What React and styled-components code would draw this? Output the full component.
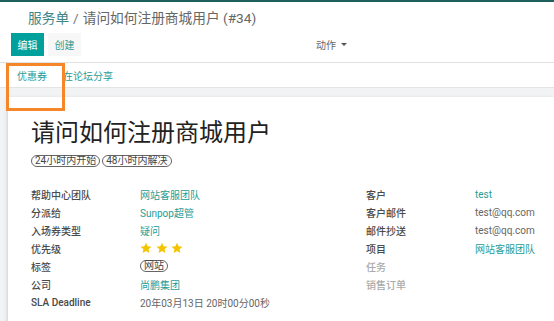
import React from "react";
import styled, { createGlobalStyle } from "styled-components";

const Global = createGlobalStyle`
  html, body { margin: 0; padding: 0; background: #fff; }
  body { font-family: Roboto, "Noto Sans CJK SC", sans-serif; overflow: hidden; }
  * { box-sizing: border-box; }
`;

const Page = styled.div`
  position: relative;
  width: 554px;
  height: 321px;
  overflow: hidden;
  border-top: 2px solid #1e5f5e;
`;

const ControlPanel = styled.div`
  border-bottom: 1px solid #e2e2e2;
  padding: 6px 0 6px 11px;
`;

const Breadcrumb = styled.div`
  padding-left: 17px;
  font-size: 13.7px;
  line-height: 20px;
  color: #666;
  height: 25px;
`;

const Crumb = styled.span`
  color: #3f8583;
`;

const Sep = styled.span`
  margin: 0 4px;
  color: #777;
`;

const ButtonsRow = styled.div`
  display: grid;
  grid-template-columns: 266px 1fr;
  align-items: center;
`;

const ButtonGroup = styled.div`
  display: flex;
  gap: 4px;
`;

const Button = styled.button`
  height: 23px;
  width: 33px;
  border: none;
  border-radius: 0;
  padding: 0;
  font-family: inherit;
  font-size: 10px;
  background: ${(p) => (p.$primary ? "#00a09d" : "#f7f7f7")};
  color: ${(p) => (p.$primary ? "#fff" : "#2a9a96")};
`;

const Action = styled.div`
  padding-left: 39px;
  font-size: 10px;
  color: #666;
  display: flex;
  align-items: center;
  gap: 5px;
`;

const Caret = styled.span`
  width: 0;
  height: 0;
  border-left: 3px solid transparent;
  border-right: 3px solid transparent;
  border-top: 3px solid #555;
`;

const StatusBar = styled.div`
  height: 24px;
  display: flex;
  align-items: center;
  padding-left: 17px;
  gap: 16px;
  background: #fff;
`;

const StatusLink = styled.span`
  font-size: 10px;
  color: #1f9c97;
`;

const FormBg = styled.div`
  background: #f2f3f4;
  border-top: 1px solid #e4e4e4;
  padding: 9px 0 0 7px;
`;

const Sheet = styled.div`
  background: #fff;
  border-left: 1px solid #dcdcdc;
  box-shadow: -1px 0 3px rgba(0, 0, 0, 0.08);
  padding: 20px 0 20px 23px;
  min-height: 240px;
`;

const Title = styled.h1`
  margin: 0;
  font-size: 24px;
  font-weight: 400;
  line-height: 32px;
  color: #222;
`;

const Tags = styled.div`
  display: flex;
  gap: 2px;
  margin-top: 6px;
`;

const Pill = styled.span`
  display: inline-flex;
  align-items: center;
  height: 12px;
  padding: 0 3px;
  border: ${(p) => (p.$thick ? "1.5px" : "1px")} solid #666;
  border-radius: 7px;
  font-size: 10px;
  line-height: 10px;
  color: #444;
`;

const Groups = styled.div`
  display: grid;
  grid-template-columns: 335px 1fr;
  margin-top: 18px;
`;

const Group = styled.div`
  display: grid;
  grid-template-columns: 109px 1fr;
  grid-auto-rows: 18px;
  align-items: center;
`;

const Label = styled.div`
  font-size: 10px;
  font-weight: 500;
  color: ${(p) => (p.$muted ? "#aaa" : "#4a4a4a")};
`;

const Value = styled.div`
  font-size: 10px;
  color: ${(p) => (p.$link ? "#1f9c97" : "#666")};
  display: flex;
  align-items: center;
`;

const Stars = styled.div`
  display: flex;
  gap: 3.5px;
`;

const Highlight = styled.div`
  position: absolute;
  left: 6px;
  top: 61px;
  width: 59px;
  height: 48px;
  border: 3px solid #f6862a;
`;

const Star = () => (
  <svg width="12" height="12" viewBox="0 0 24 24">
    <path
      d="M12 1.5l3.2 7.1 7.7.7-5.8 5.1 1.7 7.6L12 18l-6.8 4 1.7-7.6L1.1 9.3l7.7-.7z"
      fill="#f3c500"
    />
  </svg>
);

const left = [
  ["帮助中心团队", <Value $link>网站客服团队</Value>],
  ["分派给", <Value $link>Sunpop超管</Value>],
  ["入场券类型", <Value $link>疑问</Value>],
  [
    "优先级",
    <Value>
      <Stars>
        <Star />
        <Star />
        <Star />
      </Stars>
    </Value>,
  ],
  [
    "标签",
    <Value>
      <Pill $thick>网站</Pill>
    </Value>,
  ],
  ["公司", <Value $link>尚鹏集团</Value>],
  ["SLA Deadline", <Value>20年03月13日 20时00分00秒</Value>],
];

const right = [
  ["客户", <Value $link>test</Value>],
  ["客户邮件", <Value>test@qq.com</Value>],
  ["邮件抄送", <Value>test@qq.com</Value>],
  ["项目", <Value $link>网站客服团队</Value>],
  ["任务", <Value />, true],
  ["销售订单", <Value />, true],
];

export default function App() {
  return (
    <>
      <Global />
      <Page>
        <ControlPanel>
          <Breadcrumb>
            <Crumb>服务单</Crumb>
            <Sep>/</Sep>请问如何注册商城用户 (#34)
          </Breadcrumb>
          <ButtonsRow>
            <ButtonGroup>
              <Button $primary>编辑</Button>
              <Button>创建</Button>
            </ButtonGroup>
            <Action>
              动作 <Caret />
            </Action>
          </ButtonsRow>
        </ControlPanel>
        <StatusBar>
          <StatusLink>优惠券</StatusLink>
          <StatusLink>在论坛分享</StatusLink>
        </StatusBar>
        <FormBg>
          <Sheet>
            <Title>请问如何注册商城用户</Title>
            <Tags>
              <Pill>24小时内开始</Pill>
              <Pill>48小时内解决</Pill>
            </Tags>
            <Groups>
              <Group>
                {left.map(([l, v]) => (
                  <React.Fragment key={l}>
                    <Label>{l}</Label>
                    {v}
                  </React.Fragment>
                ))}
              </Group>
              <Group>
                {right.map(([l, v, m]) => (
                  <React.Fragment key={l}>
                    <Label $muted={m}>{l}</Label>
                    {v}
                  </React.Fragment>
                ))}
              </Group>
            </Groups>
          </Sheet>
        </FormBg>
        <Highlight />
      </Page>
    </>
  );
}
